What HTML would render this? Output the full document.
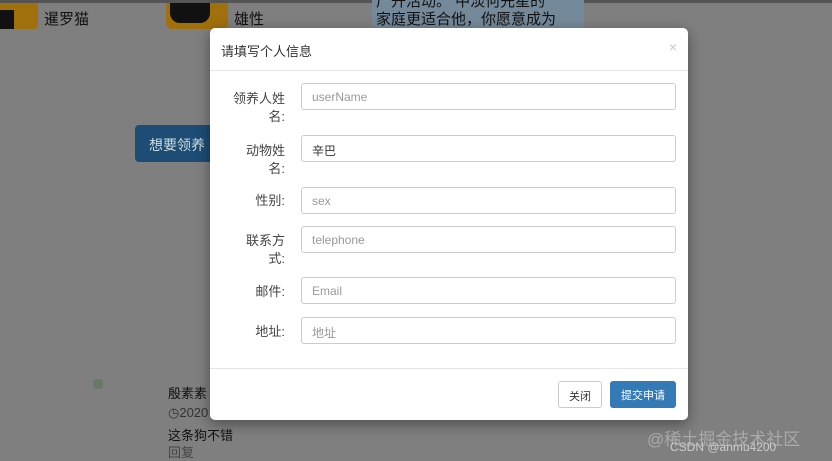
<!DOCTYPE html>
<html><head><meta charset="utf-8"><style>
*{box-sizing:border-box;margin:0;padding:0}
body{width:832px;height:461px;overflow:hidden;background:#7f7f7f;font-family:"Liberation Sans","Noto Sans CJK SC",sans-serif;position:relative;color:#222}
.a{position:absolute}
.topbar{left:0;top:0;width:832px;height:3px;background:#555}
.modal{left:210px;top:28px;width:478px;height:392px;background:#fff;border-radius:5px;box-shadow:0 4px 14px rgba(0,0,0,.4)}
.hd{height:43px;border-bottom:1px solid #e5e5e5;font-size:13px;color:#333;padding:13px 0 0 11px}
.x{right:11px;top:11px;color:#c8c8c8;font-size:14px}
.lbl{font-size:13px;color:#444;text-align:right;width:75px;line-height:18px}
.inp{left:91px;width:375px;height:27px;border:1px solid #ccc;border-radius:3px;font-size:12px;color:#999;padding:6px 10px}
.ft{left:0;top:340px;width:478px;border-top:1px solid #e5e5e5}
.btn{height:27px;border-radius:3px;font-size:11px;padding-top:6px;text-align:center}
</style></head><body>
<div class="a topbar"></div>
<div class="a" style="left:0;top:3px;width:38px;height:26px;background:#a0700c;border-radius:0 0 4px 0"></div>
<div class="a" style="left:0;top:10px;width:14px;height:19px;background:#111"></div>
<div class="a" style="left:44px;top:8px;font-size:15px;color:#111">暹罗猫</div>
<div class="a" style="left:166px;top:3px;width:62px;height:26px;background:#a0700c;border-radius:0 0 6px 6px"></div>
<div class="a" style="left:170px;top:3px;width:40px;height:20px;background:#111;border-radius:0 0 10px 10px"></div>
<div class="a" style="left:234px;top:8px;font-size:15px;color:#111">雄性</div>
<div class="a" style="left:372px;top:0;width:212px;height:30px;background:#74899a"></div>
<div class="a" style="left:376px;top:-7px;font-size:15px;color:#111;line-height:18px">广开活动。 中淡何先星的<br>家庭更适合他，你愿意成为</div>
<div class="a" style="left:135px;top:125px;width:80px;height:37px;background:#1d4c74;border-radius:4px;color:#cdd;font-size:14px;padding:10px 0 0 14px">想要领养</div>
<div class="a" style="left:93px;top:379px;width:10px;height:10px;background:#6a7a6a;border-radius:3px"></div>
<div class="a" style="left:168px;top:383px;font-size:13px;color:#111">殷素素</div>
<div class="a" style="left:168px;top:405px;font-size:13px;color:#333">◷2020</div>
<div class="a" style="left:168px;top:425px;font-size:13px;color:#111">这条狗不错</div>
<div class="a" style="left:168px;top:442px;font-size:13px;color:#444">回复</div>
<div class="a" style="left:647px;top:425px;font-size:17px;color:#aaa">@稀土掘金技术社区</div>
<div class="a" style="left:670px;top:440px;font-size:12px;color:#ccc">CSDN @anmu4200</div>
<div class="a modal">
<div class="hd">请填写个人信息</div>
<div class="a x">×</div>
<div class="a lbl" style="left:0;top:62px">领养人姓<br>名:</div>
<div class="a inp" style="top:55px">userName</div>
<div class="a lbl" style="left:0;top:114px">动物姓<br>名:</div>
<div class="a inp" style="top:107px;color:#333">辛巴</div>
<div class="a lbl" style="left:0;top:164px">性别:</div>
<div class="a inp" style="top:159px">sex</div>
<div class="a lbl" style="left:0;top:204px">联系方<br>式:</div>
<div class="a inp" style="top:198px">telephone</div>
<div class="a lbl" style="left:0;top:255px">邮件:</div>
<div class="a inp" style="top:249px">Email</div>
<div class="a lbl" style="left:0;top:295px">地址:</div>
<div class="a inp" style="top:289px">地址</div>
<div class="a ft"></div>
<div class="a btn" style="left:348px;top:353px;width:44px;border:1px solid #ccc;color:#333">关闭</div>
<div class="a btn" style="left:400px;top:353px;width:66px;background:#337ab7;color:#fff">提交申请</div>
</div>
</body></html>
